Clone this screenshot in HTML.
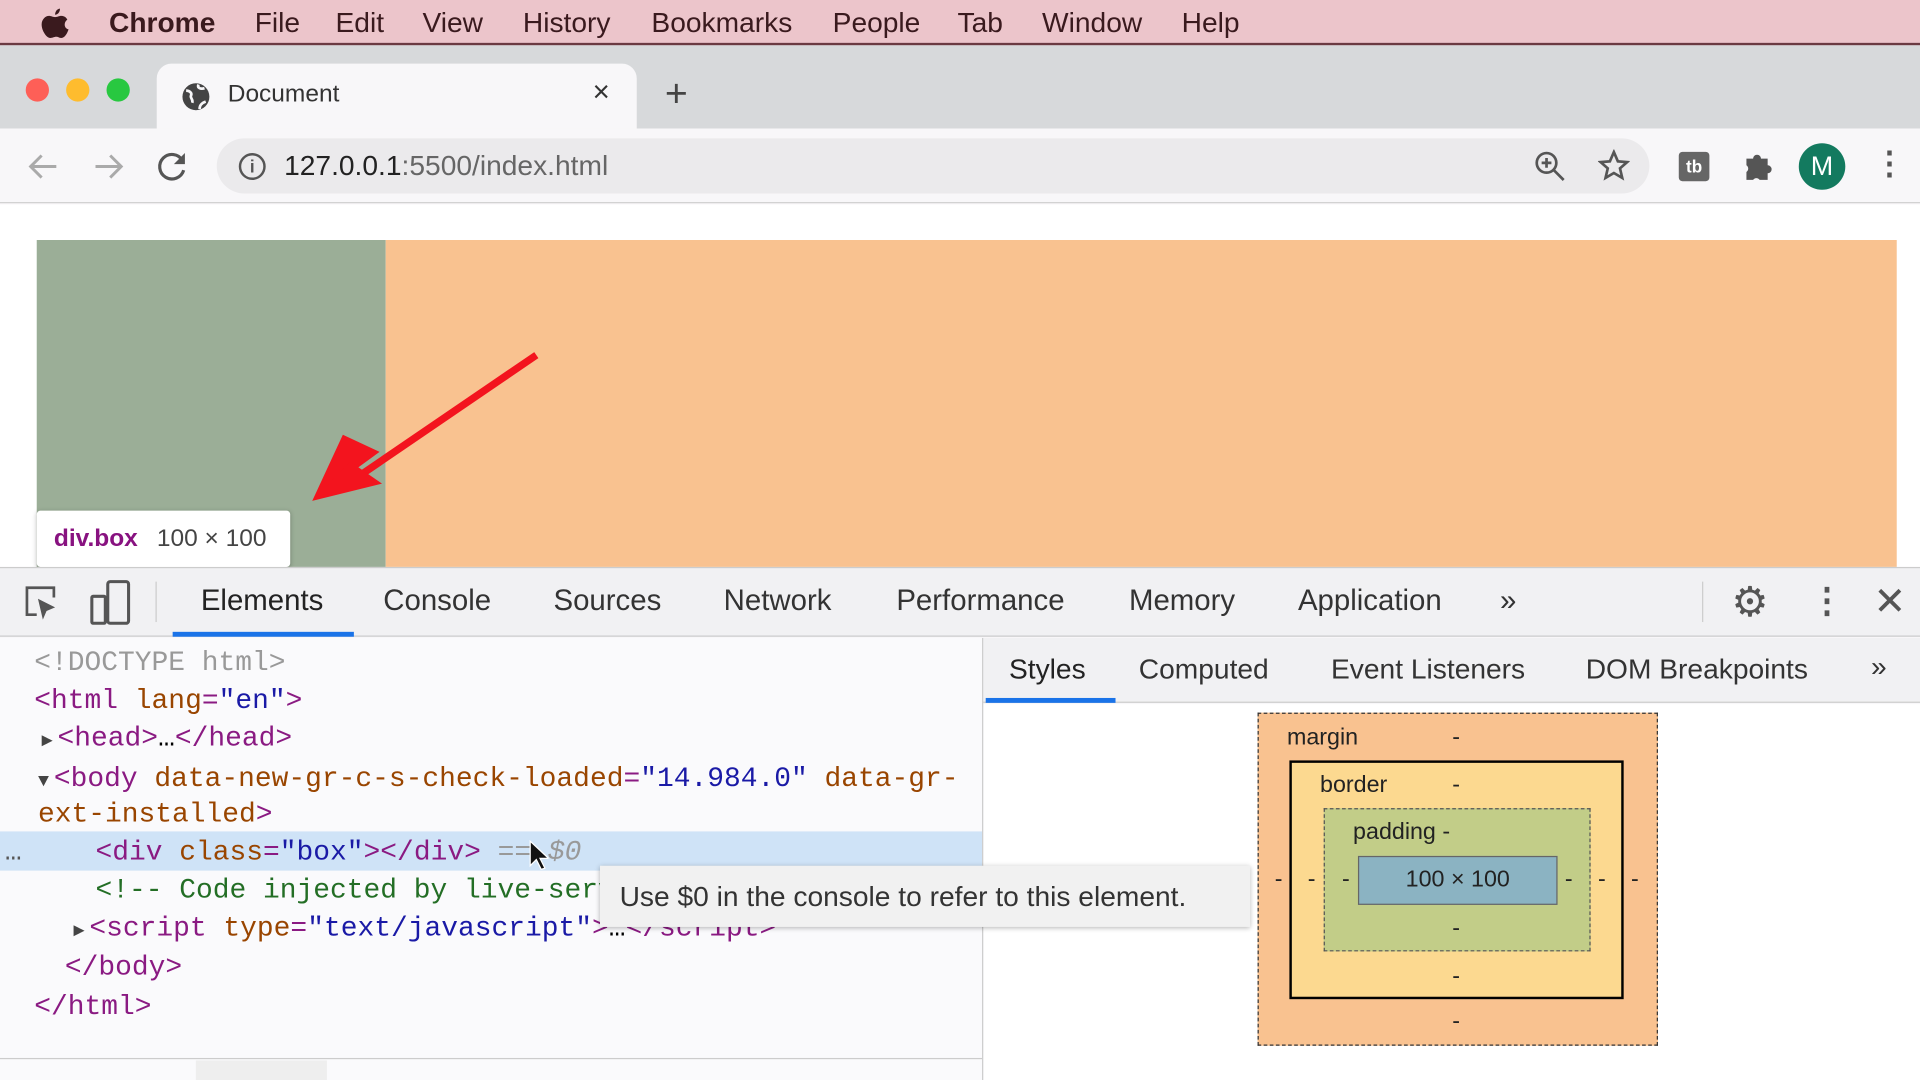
<!DOCTYPE html>
<html><head><style>
*{margin:0;padding:0;box-sizing:border-box}
html,body{width:1920px;height:1080px;overflow:hidden;background:#fff}
#w{width:1568px;height:882px;transform:scale(1.22449);transform-origin:0 0;position:relative;font-family:"Liberation Sans",sans-serif;background:#f8f7f9}
.a{position:absolute}
.menu{top:0;left:0;width:1568px;height:37px;background:#ecc5cb;border-bottom:2px solid #6b3a42;color:#3a1a1e;font-size:23px}
.menu span{position:absolute;top:5px}
.tabs{top:37px;left:0;width:1568px;height:68px;background:#d7d9db}
.tab{top:52px;left:128px;width:392px;height:54px;background:#f8f7f9;border-radius:12px 12px 0 0}
.dot{width:19px;height:19px;border-radius:50%;top:64px}
.addr{top:105px;left:0;width:1568px;height:61px;background:#f8f7f9;border-bottom:1px solid #d0d0d0}
.omni{top:113px;left:177px;width:1170px;height:45px;background:#ebeaec;border-radius:23px}
.mono{font-family:"Liberation Mono",monospace;font-size:22.8px;position:absolute;white-space:pre}
.tg{color:#8a1a82}.at{color:#994500}.av{color:#1a1aa6}.gr{color:#999}
.tri{font-size:15px;color:#444;display:inline-block;width:13px}
</style></head><body><div id="w">
<div class="a menu">
<svg class="a" style="left:33px;top:6px" width="24" height="26" viewBox="0 0 24 26"><path d="M16 1c0 3-2 5-4 5 0-3 2-5 4-5zM12 8c2 0 3-1 5-1 2 0 4 1 5 3-3 2-3 7 1 8-1 3-3 7-6 7-2 0-2-1-4-1s-3 1-5 1C5 25 1 19 1 14c0-4 3-7 6-7 2 0 3 1 5 1z" fill="#3a1a1e"/></svg>
<span style="left:89px;font-weight:bold">Chrome</span><span style="left:208px">File</span><span style="left:274px">Edit</span><span style="left:345px">View</span><span style="left:427px">History</span><span style="left:532px">Bookmarks</span><span style="left:680px">People</span><span style="left:782px">Tab</span><span style="left:851px">Window</span><span style="left:965px">Help</span>
</div>
<div class="a tabs"></div>
<div class="a dot" style="left:21px;background:#fe5f57"></div><div class="a dot" style="left:54px;background:#febc2e"></div><div class="a dot" style="left:87px;background:#28c840"></div>
<div class="a tab"></div>
<svg class="a" style="left:148px;top:67px" width="24" height="24" viewBox="0 0 24 24"><circle cx="12" cy="12" r="11" fill="#444"/><path d="M4 7c3 0 5 2 4 4s2 3 1 6M14 2c-1 3 2 4 5 3M15 22c0-3 2-5 5-6" stroke="#f8f7f9" stroke-width="2.2" fill="none"/></svg>
<div class="a" style="left:186px;top:66px;font-size:20px;color:#333">Document</div>
<div class="a" style="left:484px;top:62px;font-size:24px;color:#333">×</div>
<div class="a" style="left:543px;top:58px;font-size:32px;color:#444">+</div>
<div class="a addr"></div>
<svg class="a" style="left:22px;top:124px" width="26" height="24"><path d="M24 12H4M12 3L3 12l9 9" stroke="#aaa" stroke-width="2.4" fill="none"/></svg>
<svg class="a" style="left:76px;top:124px" width="26" height="24"><path d="M2 12h20M14 3l9 9-9 9" stroke="#aaa" stroke-width="2.4" fill="none"/></svg>
<svg class="a" style="left:128px;top:123px" width="26" height="26" viewBox="0 0 26 26"><path d="M21 8A10 10 0 1 0 22 16" stroke="#555" stroke-width="2.6" fill="none"/><path d="M23 2v9h-9z" fill="#555"/></svg>
<div class="a omni"></div>
<div class="a" style="left:195px;top:125px;width:22px;height:22px;border:2px solid #555;border-radius:50%;font-size:14px;text-align:center;line-height:18px;color:#555;font-weight:bold">i</div>
<div class="a" style="left:232px;top:122px;font-size:23px;color:#222">127.0.0.1<span style="color:#666">:5500/index.html</span></div>
<svg class="a" style="left:1253px;top:123px" width="26" height="26"><circle cx="10" cy="10" r="8" stroke="#555" stroke-width="2.2" fill="none"/><path d="M16 16l8 8M6 10h8M10 6v8" stroke="#555" stroke-width="2.2"/></svg>
<svg class="a" style="left:1305px;top:122px" width="26" height="26" viewBox="0 0 24 24"><path d="M12 2l3 7 7 .6-5.4 4.7 1.7 7.2L12 17.8 5.7 21.5l1.7-7.2L2 9.6 9 9z" stroke="#555" stroke-width="2" fill="none"/></svg>
<div class="a" style="left:1371px;top:124px;width:25px;height:24px;background:#666;border-radius:3px;color:#fff;font-size:14px;font-weight:bold;text-align:center;line-height:24px">tb</div>
<svg class="a" style="left:1423px;top:122px" width="26" height="26" viewBox="0 0 24 24"><path d="M3 7h5a3 3 0 0 1 6 0h5v5a3 3 0 0 1 0 6v5h-6a3 3 0 0 0-5 0H3v-6a3 3 0 0 0 0-5z" fill="#555"/></svg>
<div class="a" style="left:1469px;top:117px;width:38px;height:38px;border-radius:50%;background:#137a5f;color:#fff;font-size:22px;text-align:center;line-height:38px">M</div>
<div class="a" style="left:1530px;top:118px;font-size:26px;color:#555;font-weight:bold">⋮</div>
<!-- page -->
<div class="a" style="left:0;top:167px;width:1568px;height:296px;background:#fff"></div>
<div class="a" style="left:30px;top:196px;width:285px;height:267px;background:#9bae97"></div>
<div class="a" style="left:315px;top:196px;width:1234px;height:267px;background:#f9c290"></div>
<svg class="a" style="left:250px;top:285px" width="200" height="130"><line x1="188" y1="5" x2="40" y2="106" stroke="#f3141e" stroke-width="6"/><polygon points="5,124 60,84 30,70" fill="#f3141e"/><polygon points="5,124 62,110 36,92" fill="#f3141e"/></svg>
<div class="a" style="left:30px;top:417px;width:207px;height:46px;background:#fff;border-radius:3px;box-shadow:0 1px 4px rgba(0,0,0,.25)"></div>
<div class="a" style="left:44px;top:429px;font-size:20px"><b style="color:#881280">div.box</b> <span style="color:#444;margin-left:10px">100 × 100</span></div>
<!-- devtools toolbar -->
<div class="a" style="left:0;top:463px;width:1568px;height:57px;background:#f1f1f3;border-top:1px solid #ccc;border-bottom:1px solid #ccc"></div>
<svg class="a" style="left:19px;top:477px" width="32" height="32"><path d="M11 25H3V3h22v8" stroke="#555" stroke-width="2.2" fill="none"/><path d="M12 12l4 17 3-7 7-3z" fill="#555"/></svg>
<svg class="a" style="left:73px;top:473px" width="34" height="38"><rect x="15" y="2" width="17" height="34" rx="2" stroke="#555" stroke-width="2.5" fill="none"/><rect x="2" y="14" width="11" height="22" rx="1" stroke="#555" stroke-width="2.5" fill="none"/></svg>
<div class="a" style="left:127px;top:475px;width:1px;height:33px;background:#ccc"></div>
<div class="a" style="top:477px;left:0;font-size:24px;color:#333;width:1568px">
<span class="a" style="left:164px;color:#222">Elements</span><span class="a" style="left:313px">Console</span><span class="a" style="left:452px">Sources</span><span class="a" style="left:591px">Network</span><span class="a" style="left:732px">Performance</span><span class="a" style="left:922px">Memory</span><span class="a" style="left:1060px">Application</span><span class="a" style="left:1225px">»</span></div>
<div class="a" style="left:141px;top:516px;width:148px;height:4px;background:#1a73e8"></div>
<div class="a" style="left:1390px;top:475px;width:1px;height:33px;background:#ccc"></div>
<div class="a" style="left:1414px;top:472px;font-size:34px;color:#555">⚙</div>
<div class="a" style="left:1478px;top:474px;font-size:28px;color:#555;font-weight:bold">⋮</div>
<div class="a" style="left:1530px;top:472px;font-size:32px;color:#555">✕</div>
<!-- styles -->
<div class="a" style="left:803px;top:521px;width:765px;height:53px;background:#f1f1f3;border-bottom:1px solid #ccc;font-size:23px;color:#333">
<span class="a" style="left:21px;top:12px;color:#222">Styles</span><span class="a" style="left:127px;top:12px">Computed</span><span class="a" style="left:284px;top:12px">Event Listeners</span><span class="a" style="left:492px;top:12px">DOM Breakpoints</span><span class="a" style="left:725px;top:10px">»</span></div>
<div class="a" style="left:805px;top:570px;width:106px;height:4px;background:#1a73e8"></div>
<div class="a" style="left:803px;top:575px;width:765px;height:307px;background:#fff"></div>
<div class="a" style="left:1027px;top:582px;width:327px;height:272px;background:#f9c290;border:1.5px dashed #333"></div>
<div class="a" style="left:1053px;top:621px;width:273px;height:195px;background:#fcd990;border:2px solid #000"></div>
<div class="a" style="left:1081px;top:660px;width:218px;height:117px;background:#c2cd88;border:1.5px dashed #555"></div>
<div class="a" style="left:1109px;top:699px;width:163px;height:40px;background:#8bb3c2;border:1px solid #666;text-align:center;line-height:38px;font-size:19px;color:#222">100 × 100</div>
<div class="a" style="left:0;top:0;font-size:19px;color:#222;width:1568px">
<span class="a" style="left:1051px;top:592px">margin</span><span class="a" style="left:1186px;top:592px">-</span>
<span class="a" style="left:1078px;top:631px">border</span><span class="a" style="left:1186px;top:631px">-</span>
<span class="a" style="left:1105px;top:669px">padding -</span>
<span class="a" style="left:1186px;top:748px">-</span><span class="a" style="left:1186px;top:787px">-</span><span class="a" style="left:1186px;top:824px">-</span>
<span class="a" style="left:1041px;top:708px">-</span><span class="a" style="left:1068px;top:708px">-</span><span class="a" style="left:1096px;top:708px">-</span>
<span class="a" style="left:1278px;top:708px">-</span><span class="a" style="left:1305px;top:708px">-</span><span class="a" style="left:1332px;top:708px">-</span></div>
<!-- elements -->
<div class="a" style="left:0;top:521px;width:802px;height:361px;background:#fafafc"></div>
<div class="a" style="left:0;top:679px;width:802px;height:32px;background:#cfe3f7"></div>
<div class="a" style="left:802px;top:521px;width:1px;height:361px;background:#ccc"></div>
<div class="a" style="left:0;top:864px;width:802px;height:1px;background:#ccc"></div>
<div class="a" style="left:160px;top:866px;width:107px;height:16px;background:#eee"></div>
<div class="mono gr" style="left:28px;top:528px">&lt;!DOCTYPE html&gt;</div>
<div class="mono" style="left:28px;top:559px"><span class="tg">&lt;html </span><span class="at">lang</span><span class="tg">=</span><span class="av">"en"</span><span class="tg">&gt;</span></div>
<div class="mono" style="left:34px;top:590px"><span class="tri">▶</span><span class="tg">&lt;head&gt;</span>…<span class="tg">&lt;/head&gt;</span></div>
<div class="mono" style="left:31px;top:623px"><span class="tri">▼</span><span class="tg">&lt;body </span><span class="at">data-new-gr-c-s-check-loaded</span><span class="tg">=</span><span class="av">"14.984.0"</span> <span class="at">data-gr-</span></div>
<div class="mono" style="left:31px;top:652px"><span class="at">ext-installed</span><span class="tg">&gt;</span></div>
<div class="mono" style="left:4px;top:683px;color:#555">…</div>
<div class="mono" style="left:78px;top:683px"><span class="tg">&lt;div </span><span class="at">class</span><span class="tg">=</span><span class="av">"box"</span><span class="tg">&gt;&lt;/div&gt;</span> <span class="gr">== </span><i class="gr">$0</i></div>
<div class="mono" style="left:78px;top:714px;color:#236e25">&lt;!-- Code injected by live-serv</div>
<div class="mono" style="left:60px;top:745px"><span class="tri">▶</span><span class="tg">&lt;script </span><span class="at">type</span><span class="tg">=</span><span class="av">"text/javascript"</span><span class="tg">&gt;</span>…<span class="tg">&lt;/script&gt;</span></div>
<div class="mono tg" style="left:53px;top:777px">&lt;/body&gt;</div>
<div class="mono tg" style="left:28px;top:809px">&lt;/html&gt;</div>
<svg class="a" style="left:432px;top:686px" width="16" height="26"><path d="M1 1v20l5-5 4 8 3-1-4-8h7z" fill="#111" stroke="#fff" stroke-width="1"/></svg>
<div class="a" style="left:490px;top:707px;width:531px;height:50px;background:#f1f1f1;box-shadow:0 1px 4px rgba(0,0,0,.3);font-size:23px;color:#333;padding:12px 0 0 16px">Use $0 in the console to refer to this element.</div>
</div></body></html>
